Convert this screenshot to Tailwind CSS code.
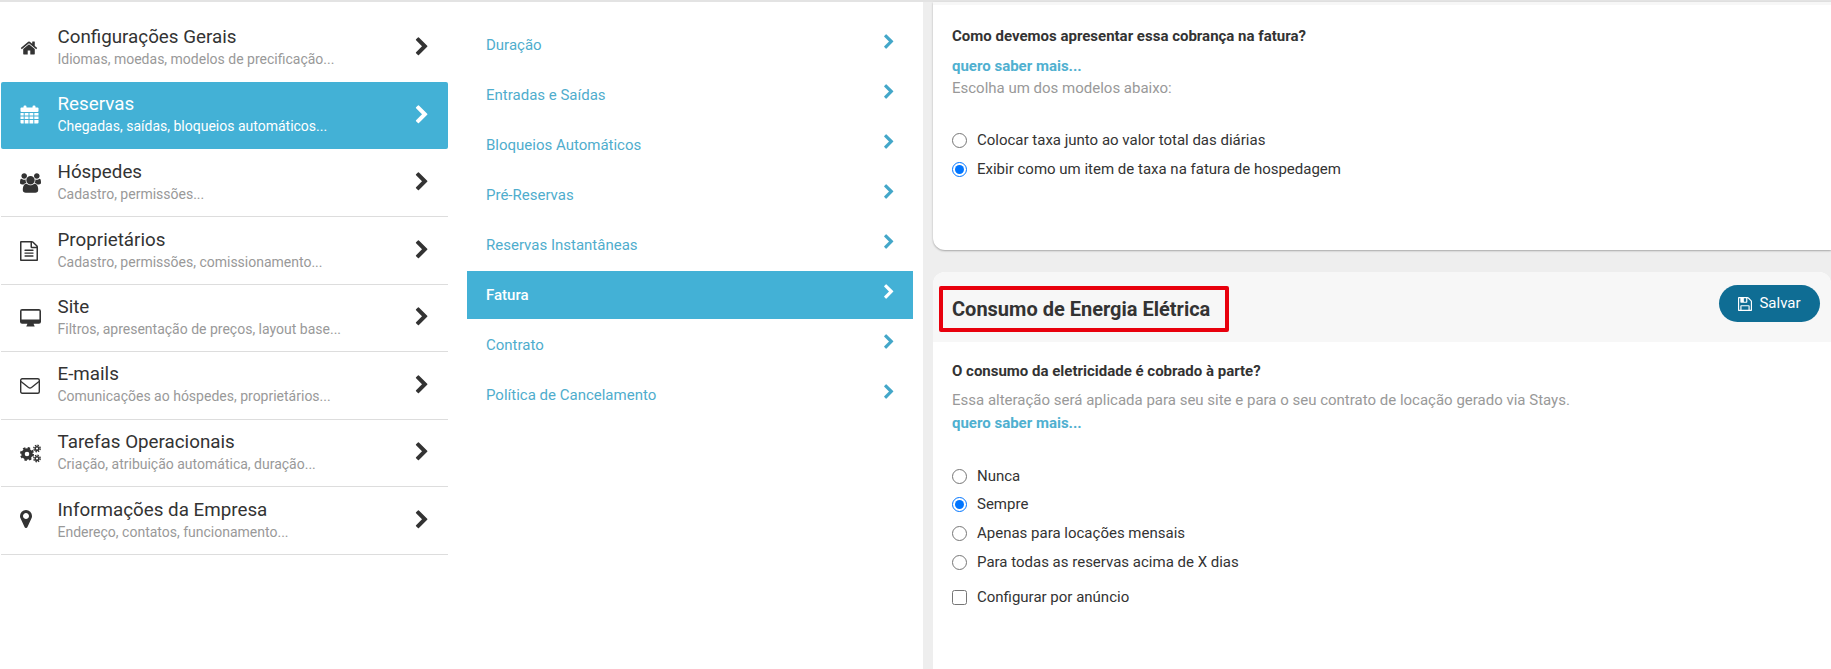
<!DOCTYPE html>
<html lang="pt-BR">
<head>
    <meta charset="UTF-8">
    <title>Configurações - Fatura</title>
    <script src="https://cdn.jsdelivr.net/npm/@tailwindcss/browser@4"></script>
</head>
<body class="bg-white font-['Roboto',sans-serif] text-[#333] overflow-hidden">
<div class="h-[669px] w-[1831px] flex flex-col overflow-hidden">
    <div class="h-[2px] bg-[#e3e3e3] shrink-0"></div>
    <div class="flex flex-1 min-h-0">

        <!-- main menu -->
        <nav class="w-[447px] ml-px pt-[12px] shrink-0">
            <a class="flex items-center h-[68px] pl-[19px] pr-[16px]">
                <span class="w-[37.500px] shrink-0"><svg class="w-[18px] h-[18px]" viewBox="0 0 1792 1792" fill="currentColor"><path d="M1472 992v480q0 26-19 45t-45 19h-384v-384h-256v384h-384q-26 0-45-19t-19-45v-480q0-1 .5-3t.5-3l575-474 575 474q1 2 1 6zm223-69l-62 74q-8 9-21 11h-3q-13 0-21-7l-692-577-692 577q-12 8-24 7-13-2-21-11l-62-74q-8-10-7-23.500t11-21.500l719-599q32-26 76-26t76 26l244 204v-195q0-14 9-23t23-9h192q14 0 23 9t9 23v408l219 182q10 8 11 21.500t-7 23.500z"/></svg></span>
                <span class="flex-1 flex flex-col mb-[3px]"><span class="text-[18.800px] leading-[24px]">Configurações Gerais</span><span class="text-[14px] leading-[20px] text-[#999]">Idiomas, moedas, modelos de precificação...</span></span>
                <svg class="w-[20px] h-[20px] mb-[2px]" viewBox="0 0 1792 1792" fill="currentColor"><path d="M1363 877l-742 742q-19 19-45 19t-45-19l-166-166q-19-19-19-45t19-45l531-531-531-531q-19-19-19-45t19-45l166-166q19-19 45-19t45 19l742 742q19 19 19 45t-19 45z"/></svg>
            </a>
            <a class="flex items-center h-[67px] pl-[19px] pr-[16px] bg-[#43b1d6] text-white rounded-[2px]">
                <span class="w-[37.500px] shrink-0"><svg class="w-[19px] h-[20px] block mb-[2px]" viewBox="0 0 19 20" fill="currentColor"><rect x="0.500" y="2.500" width="18" height="4.500" rx="1"/><rect x="3.500" y="0.500" width="3" height="4" rx="1.200"/><rect x="12.500" y="0.500" width="3" height="4" rx="1.200"/><path d="M.5 8h3.200v2.500H.5zM4.700 8h3.800v2.500H4.700zM9.500 8h3.800v2.500H9.500zM14.300 8h4.200v2.500h-4.200zM.5 11.500h3.200V14H.5zM4.700 11.500h3.800V14H4.700zM9.500 11.500h3.800V14H9.500zM14.300 11.500h4.200V14h-4.200zM.5 15h3.200v3.500H1.500a1 1 0 01-1-1zM4.700 15h3.800v3.500H4.700zM9.500 15h3.800v3.500H9.500zM14.300 15h4.200v2.500a1 1 0 01-1 1h-3.200z"/></svg></span>
                <span class="flex-1 flex flex-col mb-[3px]"><span class="text-[18.800px] leading-[24px]">Reservas</span><span class="text-[14px] leading-[20px]">Chegadas, saídas, bloqueios automáticos...</span></span>
                <svg class="w-[20px] h-[20px] mb-[2px]" viewBox="0 0 1792 1792" fill="currentColor"><path d="M1363 877l-742 742q-19 19-45 19t-45-19l-166-166q-19-19-19-45t19-45l531-531-531-531q-19-19-19-45t19-45l166-166q19-19 45-19t45 19l742 742q19 19 19 45t-19 45z"/></svg>
            </a>
            <a class="flex items-center h-[68px] pl-[19px] pr-[16px] border-b border-[#ddd]">
                <span class="w-[37.500px] shrink-0"><svg class="w-[21px] h-[20px] block" viewBox="0 0 1920 1792" fill="currentColor"><path d="M593 896q-162 5-265 128h-134q-82 0-138-40.500t-56-118.500q0-353 124-353 6 0 43.500 21t97.500 42.500 119 21.500q67 0 133-23-5 37-5 66 0 139 81 256zm1071 637q0 120-73 189.500t-194 69.500h-874q-121 0-194-69.500t-73-189.500q0-53 3.500-103.500t14-109 26.500-108.500 43-97.500 62-81 85.500-53.500 111.500-20q10 0 43 21.500t73 48 107 48 135 21.500 135-21.500 107-48 73-48 43-21.500q61 0 111.500 20t85.500 53.500 62 81 43 97.500 26.500 108.500 14 109 3.500 103.500zm-1024-1277q0 106-75 181t-181 75-181-75-75-181 75-181 181-75 181 75 75 181zm704 384q0 159-112.500 271.500t-271.500 112.500-271.500-112.500-112.500-271.500 112.500-271.500 271.500-112.500 271.500 112.500 112.500 271.500zm576 225q0 78-56 118.500t-138 40.500h-134q-103-123-265-128 81-117 81-256 0-29-5-66 66 23 133 23 59 0 119-21.500t97.500-42.500 43.500-21q124 0 124 353zm-128-609q0 106-75 181t-181 75-181-75-75-181 75-181 181-75 181 75 75 181z"/></svg></span>
                <span class="flex-1 flex flex-col mb-[2px]"><span class="text-[18.800px] leading-[24px]">Hóspedes</span><span class="text-[14px] leading-[20px] text-[#999]">Cadastro, permissões...</span></span>
                <svg class="w-[20px] h-[20px] mb-[2px]" viewBox="0 0 1792 1792" fill="currentColor"><path d="M1363 877l-742 742q-19 19-45 19t-45-19l-166-166q-19-19-19-45t19-45l531-531-531-531q-19-19-19-45t19-45l166-166q19-19 45-19t45 19l742 742q19 19 19 45t-19 45z"/></svg>
            </a>
            <a class="flex items-center h-[68px] pl-[19px] pr-[16px] border-b border-[#ddd]">
                <span class="w-[37.500px] shrink-0"><svg class="w-[18px] h-[20px] block" viewBox="128 0 1536 1792" fill="currentColor" preserveAspectRatio="none"><path d="M1596 380q28 28 48 76t20 88v1152q0 40-28 68t-68 28h-1344q-40 0-68-28t-28-68v-1600q0-40 28-68t68-28h896q40 0 88 20t76 48zm-444-244v376h376q-10-29-22-41l-313-313q-12-12-41-22zm384 1528v-1024h-416q-40 0-68-28t-28-68v-416h-768v1536h1280zm-1024-864q0-14 9-23t23-9h704q14 0 23 9t9 23v64q0 14-9 23t-23 9h-704q-14 0-23-9t-9-23v-64zm736 224q14 0 23 9t9 23v64q0 14-9 23t-23 9h-704q-14 0-23-9t-9-23v-64q0-14 9-23t23-9h704zm0 256q14 0 23 9t9 23v64q0 14-9 23t-23 9h-704q-14 0-23-9t-9-23v-64q0-14 9-23t23-9h704z"/></svg></span>
                <span class="flex-1 flex flex-col mb-[2px]"><span class="text-[18.800px] leading-[24px]">Proprietários</span><span class="text-[14px] leading-[20px] text-[#999]">Cadastro, permissões, comissionamento...</span></span>
                <svg class="w-[20px] h-[20px] mb-[2px]" viewBox="0 0 1792 1792" fill="currentColor"><path d="M1363 877l-742 742q-19 19-45 19t-45-19l-166-166q-19-19-19-45t19-45l531-531-531-531q-19-19-19-45t19-45l166-166q19-19 45-19t45 19l742 742q19 19 19 45t-19 45z"/></svg>
            </a>
            <a class="flex items-center h-[67px] pl-[19px] pr-[16px] border-b border-[#ddd]">
                <span class="w-[37.500px] shrink-0"><svg class="w-[21px] h-[18px] block" viewBox="0 0 20 17" fill="currentColor" fill-rule="evenodd"><path d="M2 0h16a2 2 0 012 2v10a2 2 0 01-2 2h-5c0 1 1 2 1 2.500H6c0-.5 1-1.500 1-2.500H2a2 2 0 01-2-2V2a2 2 0 012-2zM1.500 1.500v8.500h17V1.500z"/></svg></span>
                <span class="flex-1 flex flex-col mb-[3px]"><span class="text-[18.800px] leading-[24px]">Site</span><span class="text-[14px] leading-[20px] text-[#999]">Filtros, apresentação de preços, layout base...</span></span>
                <svg class="w-[20px] h-[20px] mb-[2px]" viewBox="0 0 1792 1792" fill="currentColor"><path d="M1363 877l-742 742q-19 19-45 19t-45-19l-166-166q-19-19-19-45t19-45l531-531-531-531q-19-19-19-45t19-45l166-166q19-19 45-19t45 19l742 742q19 19 19 45t-19 45z"/></svg>
            </a>
            <a class="flex items-center h-[68px] pl-[19px] pr-[16px] border-b border-[#ddd]">
                <span class="w-[37.500px] shrink-0"><svg class="w-[20px] h-[16px] block" viewBox="0 0 20 16" fill="none" stroke="currentColor" stroke-width="1.400"><rect x="0.700" y="0.700" width="18.600" height="14.600" rx="1.500"/><path d="M1 3.500l7.500 6q1.500 1 3 0l7.500-6"/></svg></span>
                <span class="flex-1 flex flex-col mb-[3px]"><span class="text-[18.800px] leading-[24px]">E-mails</span><span class="text-[14px] leading-[20px] text-[#999]">Comunicações ao hóspedes, proprietários...</span></span>
                <svg class="w-[20px] h-[20px] mb-[2px]" viewBox="0 0 1792 1792" fill="currentColor"><path d="M1363 877l-742 742q-19 19-45 19t-45-19l-166-166q-19-19-19-45t19-45l531-531-531-531q-19-19-19-45t19-45l166-166q19-19 45-19t45 19l742 742q19 19 19 45t-19 45z"/></svg>
            </a>
            <a class="flex items-center h-[67px] pl-[19px] pr-[16px] border-b border-[#ddd]">
                <span class="w-[37.500px] shrink-0"><svg class="w-[21px] h-[19px] block" viewBox="0 0 21 19" fill="none" stroke="currentColor"><circle cx="7" cy="10" r="4" stroke-width="3.400"/><circle cx="7" cy="10" r="6" stroke-width="2" stroke-dasharray="2.400 2.312"/><circle cx="17" cy="4.500" r="1.800" stroke-width="1.500"/><circle cx="17" cy="4.500" r="3.200" stroke-width="1.400" stroke-dasharray="1.500 1.013"/><circle cx="17" cy="14.500" r="1.800" stroke-width="1.500"/><circle cx="17" cy="14.500" r="3.200" stroke-width="1.400" stroke-dasharray="1.500 1.013"/></svg></span>
                <span class="flex-1 flex flex-col mb-[3px]"><span class="text-[18.800px] leading-[24px]">Tarefas Operacionais</span><span class="text-[14px] leading-[20px] text-[#999]">Criação, atribuição automática, duração...</span></span>
                <svg class="w-[20px] h-[20px] mb-[2px]" viewBox="0 0 1792 1792" fill="currentColor"><path d="M1363 877l-742 742q-19 19-45 19t-45-19l-166-166q-19-19-19-45t19-45l531-531-531-531q-19-19-19-45t19-45l166-166q19-19 45-19t45 19l742 742q19 19 19 45t-19 45z"/></svg>
            </a>
            <a class="flex items-center h-[68px] pl-[19px] pr-[16px] border-b border-[#ddd]">
                <span class="w-[37.500px] shrink-0"><svg class="w-[12px] h-[18px] block mb-[3px]" viewBox="0 128 1024 1536" fill="currentColor"><path d="M768 640q0-106-75-181t-181-75-181 75-75 181 75 181 181 75 181-75 75-181zm256 0q0 109-33 179l-364 774q-16 33-47.500 52t-67.500 19-67.500-19-46.500-52l-365-774q-33-70-33-179 0-212 150-362t362-150 362 150 150 362z"/></svg></span>
                <span class="flex-1 flex flex-col mb-[2px]"><span class="text-[18.800px] leading-[24px]">Informações da Empresa</span><span class="text-[14px] leading-[20px] text-[#999]">Endereço, contatos, funcionamento...</span></span>
                <svg class="w-[20px] h-[20px] mb-[2px]" viewBox="0 0 1792 1792" fill="currentColor"><path d="M1363 877l-742 742q-19 19-45 19t-45-19l-166-166q-19-19-19-45t19-45l531-531-531-531q-19-19-19-45t19-45l166-166q19-19 45-19t45 19l742 742q19 19 19 45t-19 45z"/></svg>
            </a>
        </nav>

        <!-- submenu -->
        <nav class="w-[446px] ml-[19px] pt-[19px] shrink-0 flex flex-col gap-[2px] text-[15px] text-[#4fadcd]">
            <a class="flex items-center justify-between h-[48px] pl-[19px] pr-[16px]"><span class="mt-[1px]">Duração</span><svg class="w-[16px] h-[16px] mb-[7px]" viewBox="0 0 1792 1792" fill="#43a7c9"><path d="M1363 877l-742 742q-19 19-45 19t-45-19l-166-166q-19-19-19-45t19-45l531-531-531-531q-19-19-19-45t19-45l166-166q19-19 45-19t45 19l742 742q19 19 19 45t-19 45z"/></svg></a>
            <a class="flex items-center justify-between h-[48px] pl-[19px] pr-[16px]"><span class="mt-[1px]">Entradas e Saídas</span><svg class="w-[16px] h-[16px] mb-[7px]" viewBox="0 0 1792 1792" fill="#43a7c9"><path d="M1363 877l-742 742q-19 19-45 19t-45-19l-166-166q-19-19-19-45t19-45l531-531-531-531q-19-19-19-45t19-45l166-166q19-19 45-19t45 19l742 742q19 19 19 45t-19 45z"/></svg></a>
            <a class="flex items-center justify-between h-[48px] pl-[19px] pr-[16px]"><span class="mt-[1px]">Bloqueios Automáticos</span><svg class="w-[16px] h-[16px] mb-[7px]" viewBox="0 0 1792 1792" fill="#43a7c9"><path d="M1363 877l-742 742q-19 19-45 19t-45-19l-166-166q-19-19-19-45t19-45l531-531-531-531q-19-19-19-45t19-45l166-166q19-19 45-19t45 19l742 742q19 19 19 45t-19 45z"/></svg></a>
            <a class="flex items-center justify-between h-[48px] pl-[19px] pr-[16px]"><span class="mt-[1px]">Pré-Reservas</span><svg class="w-[16px] h-[16px] mb-[7px]" viewBox="0 0 1792 1792" fill="#43a7c9"><path d="M1363 877l-742 742q-19 19-45 19t-45-19l-166-166q-19-19-19-45t19-45l531-531-531-531q-19-19-19-45t19-45l166-166q19-19 45-19t45 19l742 742q19 19 19 45t-19 45z"/></svg></a>
            <a class="flex items-center justify-between h-[48px] pl-[19px] pr-[16px]"><span class="mt-[1px]">Reservas Instantâneas</span><svg class="w-[16px] h-[16px] mb-[7px]" viewBox="0 0 1792 1792" fill="#43a7c9"><path d="M1363 877l-742 742q-19 19-45 19t-45-19l-166-166q-19-19-19-45t19-45l531-531-531-531q-19-19-19-45t19-45l166-166q19-19 45-19t45 19l742 742q19 19 19 45t-19 45z"/></svg></a>
            <a class="flex items-center justify-between h-[48px] pl-[19px] pr-[16px] bg-[#43b1d6] text-white font-medium"><span class="mt-[1px]">Fatura</span><svg class="w-[16px] h-[16px] mb-[7px]" viewBox="0 0 1792 1792" fill="currentColor"><path d="M1363 877l-742 742q-19 19-45 19t-45-19l-166-166q-19-19-19-45t19-45l531-531-531-531q-19-19-19-45t19-45l166-166q19-19 45-19t45 19l742 742q19 19 19 45t-19 45z"/></svg></a>
            <a class="flex items-center justify-between h-[48px] pl-[19px] pr-[16px]"><span class="mt-[1px]">Contrato</span><svg class="w-[16px] h-[16px] mb-[7px]" viewBox="0 0 1792 1792" fill="#43a7c9"><path d="M1363 877l-742 742q-19 19-45 19t-45-19l-166-166q-19-19-19-45t19-45l531-531-531-531q-19-19-19-45t19-45l166-166q19-19 45-19t45 19l742 742q19 19 19 45t-19 45z"/></svg></a>
            <a class="flex items-center justify-between h-[48px] pl-[19px] pr-[16px]"><span class="mt-[1px]">Política de Cancelamento</span><svg class="w-[16px] h-[16px] mb-[7px]" viewBox="0 0 1792 1792" fill="#43a7c9"><path d="M1363 877l-742 742q-19 19-45 19t-45-19l-166-166q-19-19-19-45t19-45l531-531-531-531q-19-19-19-45t19-45l166-166q19-19 45-19t45 19l742 742q19 19 19 45t-19 45z"/></svg></a>
        </nav>

        <!-- content -->
        <main class="flex-1 min-w-0 ml-[10px] pl-[10px] bg-[#eee] flex flex-col gap-[22px] text-[15px]">
            <section class="h-[248px] shrink-0 bg-white rounded-bl-[12px] border-t-[3px] border-[#f7f7f7] shadow-[0_1px_2px_rgba(0,0,0,0.3)] pl-[19px]">
                <h3 class="font-bold leading-[20px] mt-[21px]">Como devemos apresentar essa cobrança na fatura?</h3>
                <a class="block font-bold text-[#4fb0d0] leading-[20px] mt-[10px]">quero saber mais...</a>
                <p class="text-[#999] leading-[20px] mt-[2px]">Escolha um dos modelos abaixo:</p>
                <div class="mt-[32px] flex flex-col gap-[9px]">
                    <label class="flex items-center gap-[10px] h-[20px]"><input type="radio" name="fatura" class="w-[15px] h-[15px] m-0">Colocar taxa junto ao valor total das diárias</label>
                    <label class="flex items-center gap-[10px] h-[20px]"><input type="radio" name="fatura" class="w-[15px] h-[15px] m-0" checked>Exibir como um item de taxa na fatura de hospedagem</label>
                </div>
            </section>
            <section class="flex-1 bg-white rounded-t-[12px]">
                <header class="h-[70px] bg-[#f7f7f7] rounded-t-[12px] flex items-start justify-between pl-[6px] pr-[11px] pt-[13px]">
                    <h2 class="mt-[1px] w-[290px] h-[46px] border-[4px] border-[#e8000d] rounded-[2px] px-[9px] flex items-center text-[20px] font-bold">Consumo de Energia Elétrica</h2>
                    <button class="h-[37px] w-[101px] rounded-full bg-[#0f6d94] text-white flex items-center justify-center gap-[7px]">
                        <svg class="w-[14px] h-[14px]" viewBox="128 128 1536 1536" fill="currentColor"><path d="M512 1536h768v-384h-768v384zm896 0h128v-896q0-14-10-38.500t-20-34.500l-281-281q-10-10-34-20t-39-10v416q0 40-28 68t-68 28h-576q-40 0-68-28t-28-68v-416h-128v1280h128v-416q0-40 28-68t68-28h832q40 0 68 28t28 68v416zm-384-928v-320q0-13-9.500-22.500t-22.500-9.500h-192q-13 0-22.500 9.500t-9.500 22.500v320q0 13 9.500 22.500t22.500 9.500h192q13 0 22.500-9.500t9.500-22.500zm640 32v928q0 40-28 68t-68 28h-1344q-40 0-68-28t-28-68v-1344q0-40 28-68t68-28h928q40 0 88 20t76 48l280 280q28 28 48 76t20 88z"/></svg>
                        Salvar
                    </button>
                </header>
                <div class="pl-[19px]">
                    <h3 class="font-bold leading-[20px] mt-[19px]">O consumo da eletricidade é cobrado à parte?</h3>
                    <p class="text-[#999] leading-[20px] mt-[9px]">Essa alteração será aplicada para seu site e para o seu contrato de locação gerado via Stays.</p>
                    <a class="block font-bold text-[#4fb0d0] leading-[20px] mt-[3px]">quero saber mais...</a>
                    <div class="mt-[33px] flex flex-col gap-[8.700px]">
                        <label class="flex items-center gap-[10px] h-[20px]"><input type="radio" name="energia" class="w-[15px] h-[15px] m-0">Nunca</label>
                        <label class="flex items-center gap-[10px] h-[20px]"><input type="radio" name="energia" class="w-[15px] h-[15px] m-0" checked>Sempre</label>
                        <label class="flex items-center gap-[10px] h-[20px]"><input type="radio" name="energia" class="w-[15px] h-[15px] m-0">Apenas para locações mensais</label>
                        <label class="flex items-center gap-[10px] h-[20px]"><input type="radio" name="energia" class="w-[15px] h-[15px] m-0">Para todas as reservas acima de X dias</label>
                    </div>
                    <label class="flex items-center gap-[10px] h-[20px] mt-[15px]"><input type="checkbox" class="w-[15px] h-[15px] m-0">Configurar por anúncio</label>
                </div>
            </section>
        </main>
    </div>
</div>
</body>
</html>
